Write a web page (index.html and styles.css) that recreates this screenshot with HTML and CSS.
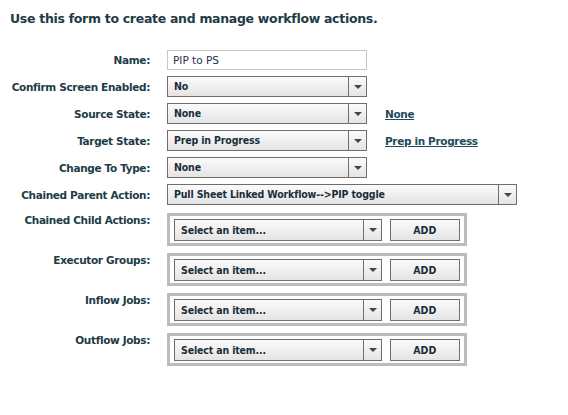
FILE: index.html
```html
<!DOCTYPE html>
<html>
<head>
<meta charset="utf-8">
<link rel="stylesheet" href="styles.css">
</head>
<body>
<h1 class="title">Use this form to create and manage workflow actions.</h1>
<div class="form">
  <div class="row">
    <div class="label">Name:</div>
    <div class="ctrl"><div class="input">PIP to PS</div></div>
  </div>
  <div class="row">
    <div class="label">Confirm Screen Enabled:</div>
    <div class="ctrl"><div class="select"><span class="val">No</span><span class="arrow"></span></div></div>
  </div>
  <div class="row">
    <div class="label">Source State:</div>
    <div class="ctrl"><div class="select"><span class="val">None</span><span class="arrow"></span></div><a class="link" href="#">None</a></div>
  </div>
  <div class="row">
    <div class="label">Target State:</div>
    <div class="ctrl"><div class="select"><span class="val">Prep in Progress</span><span class="arrow"></span></div><a class="link" href="#">Prep in Progress</a></div>
  </div>
  <div class="row">
    <div class="label">Change To Type:</div>
    <div class="ctrl"><div class="select"><span class="val">None</span><span class="arrow"></span></div></div>
  </div>
  <div class="row">
    <div class="label">Chained Parent Action:</div>
    <div class="ctrl"><div class="select wide"><span class="val">Pull Sheet Linked Workflow--&gt;PIP toggle</span><span class="arrow"></span></div></div>
  </div>
  <div class="row boxrow first">
    <div class="label">Chained Child Actions:</div>
    <div class="ctrl"><div class="box"><div class="select small"><span class="val">Select an item...</span><span class="arrow"></span></div><div class="btn">ADD</div></div></div>
  </div>
  <div class="row boxrow">
    <div class="label">Executor Groups:</div>
    <div class="ctrl"><div class="box"><div class="select small"><span class="val">Select an item...</span><span class="arrow"></span></div><div class="btn">ADD</div></div></div>
  </div>
  <div class="row boxrow">
    <div class="label">Inflow Jobs:</div>
    <div class="ctrl"><div class="box"><div class="select small"><span class="val">Select an item...</span><span class="arrow"></span></div><div class="btn">ADD</div></div></div>
  </div>
  <div class="row boxrow">
    <div class="label">Outflow Jobs:</div>
    <div class="ctrl"><div class="box"><div class="select small"><span class="val">Select an item...</span><span class="arrow"></span></div><div class="btn">ADD</div></div></div>
  </div>
</div>
</body>
</html>
```
FILE: styles.css
```css
html, body {
  margin: 0;
  padding: 0;
  background: #ffffff;
}
body {
  font-family: "DejaVu Sans", Verdana, sans-serif;
  color: #1f3a44;
}
.title {
  margin: 0;
  padding: 11px 0 0 10px;
  font-size: 12.5px;
  letter-spacing: -0.3px;
  font-weight: bold;
  line-height: 16px;
  color: #1e3b46;
}
.form {
  display: flex;
  flex-direction: column;
  padding-top: 23px;
  gap: 6px;
}
.row {
  display: flex;
  align-items: center;
  gap: 17px;
}
.label {
  width: 150px;
  text-align: right;
  font-size: 10.5px;
  letter-spacing: -0.35px;
  font-weight: bold;
  color: #213c46;
  flex: none;
}
.ctrl {
  display: flex;
  align-items: center;
  gap: 18px;
}
.input {
  box-sizing: border-box;
  width: 200px;
  height: 20px;
  border: 1px solid #c6c6c6;
  padding: 0 5px;
  font-size: 10.5px;
  line-height: 18px;
  color: #2a2a55;
}
.select {
  box-sizing: border-box;
  width: 200px;
  height: 21px;
  border: 1px solid #6e6e6e;
  background: linear-gradient(#fbfbfb, #e4e4e4);
  display: flex;
  align-items: stretch;
}
.select.wide { width: 350px; }
.select.small { width: 209px; height: 22px; }
.val {
  flex: 1;
  padding-left: 6px;
  font-family: "DejaVu Sans Condensed", "DejaVu Sans", sans-serif;
  font-size: 10.5px;
  letter-spacing: -0.15px;
  font-weight: bold;
  line-height: 19px;
  color: #1a2e38;
  white-space: nowrap;
}
.select.small .val { line-height: 20px; }
.arrow {
  width: 17px;
  border-left: 1px solid #6e6e6e;
  position: relative;
  flex: none;
}
.arrow::after {
  content: "";
  position: absolute;
  left: 5px;
  top: 50%;
  margin-top: -2px;
  border-left: 4px solid transparent;
  border-right: 4px solid transparent;
  border-top: 4px solid #444;
}
.link {
  font-size: 10.5px;
  letter-spacing: -0.35px;
  font-weight: bold;
  color: #1f4a58;
  text-decoration: underline;
}
.boxrow {
  align-items: flex-start;
  margin-top: 2px;
  gap: 17px;
}
.boxrow + .boxrow { margin-top: 1px; }
.boxrow .label { padding-top: 1px; }
.box {
  box-sizing: border-box;
  width: 300px;
  border: 3px solid #bcbcbc;
  padding: 3px 4px 2px;
  display: flex;
  gap: 8px;
}
.btn {
  box-sizing: border-box;
  width: 71px;
  height: 22px;
  border: 1px solid #6e6e6e;
  background: linear-gradient(#fbfbfb, #e4e4e4);
  text-align: center;
  font-family: "DejaVu Sans Condensed", "DejaVu Sans", sans-serif;
  font-size: 10.5px;
  font-weight: bold;
  line-height: 20px;
  color: #1a2e38;
}
```
